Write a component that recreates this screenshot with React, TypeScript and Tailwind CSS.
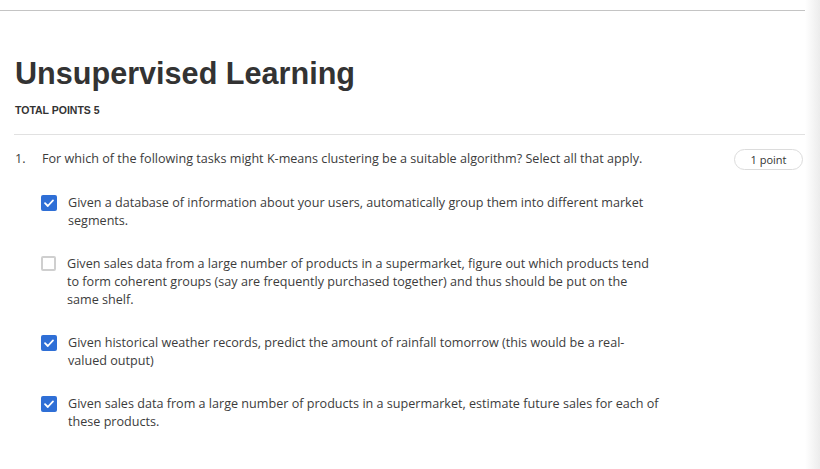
import React from 'react';

const options = [
  {
    text: 'Given a database of information about your users, automatically group them into different market segments.',
    checked: true,
  },
  {
    text: 'Given sales data from a large number of products in a supermarket, figure out which products tend to form coherent groups (say are frequently purchased together) and thus should be put on the same shelf.',
    checked: false,
  },
  {
    text: 'Given historical weather records, predict the amount of rainfall tomorrow (this would be a real-valued output)',
    checked: true,
  },
  {
    text: 'Given sales data from a large number of products in a supermarket, estimate future sales for each of these products.',
    checked: true,
  },
];

function Checkbox({ checked }: { checked: boolean }) {
  if (checked) {
    return (
      <div className="w-4 h-4 mt-[1px] shrink-0 rounded-[2px] bg-[#2f6fd6] flex items-center justify-center">
        <svg width="12" height="12" viewBox="0 0 12 12" fill="none">
          <path d="M2 6.2 L4.8 9 L10 3.4" stroke="white" strokeWidth="1.8" strokeLinecap="round" strokeLinejoin="round" />
        </svg>
      </div>
    );
  }
  return <div className="w-[15px] h-[15px] mt-[1px] shrink-0 rounded-[2px] border-2 border-[#cfcfcf] bg-white" />;
}

export default function App() {
  return (
    <div className="w-[820px] h-[469px] overflow-hidden bg-white flex">
      <div className="w-[805px] shrink-0 flex flex-col">
        <div className="h-[10px] shrink-0" />
        <div className="h-px bg-[#c4c4c4] shrink-0" />
        <div className="pl-[15px] pt-[44px]">
          <h1
            className="text-[30.6px] leading-[36px] font-bold text-[#333333]"
            style={{ fontFamily: '"Liberation Sans", Arial, sans-serif' }}
          >
            Unsupervised Learning
          </h1>
          <div
            className="mt-[13px] text-[10.5px] leading-[12px] font-bold text-[#333333]"
            style={{ fontFamily: '"Liberation Sans", Arial, sans-serif' }}
          >
            TOTAL POINTS 5
          </div>
        </div>
        <div className="ml-[14px] mt-[18px] h-px bg-[#e1e1e1]" />
        <div
          className="pl-[15px] pt-[15px] text-[12.6px] leading-[18px] text-[#3c3c3c]"
          style={{ fontFamily: '"Open Sans", sans-serif' }}
        >
          <div className="flex items-start">
            <div className="w-[27px] shrink-0">1.</div>
            <div className="flex-1">For which of the following tasks might K-means clustering be a suitable algorithm? Select all that apply.</div>
            <div className="shrink-0 mr-[2px] -mt-[1px] w-[69px] h-[21px] rounded-full border border-[#dcdcdc] flex items-center justify-center text-[11px] text-[#333]">
              1 point
            </div>
          </div>
          <div className="pl-[26px] pt-[24px] flex flex-col gap-[25px]">
            {options.map((o, i) => (
              <div key={i} className="flex items-start gap-[11px]">
                <Checkbox checked={o.checked} />
                <div className="w-[595px]">{o.text}</div>
              </div>
            ))}
          </div>
        </div>
      </div>
      <div className="flex-1 bg-gradient-to-r from-white to-[#ececec]" />
    </div>
  );
}
